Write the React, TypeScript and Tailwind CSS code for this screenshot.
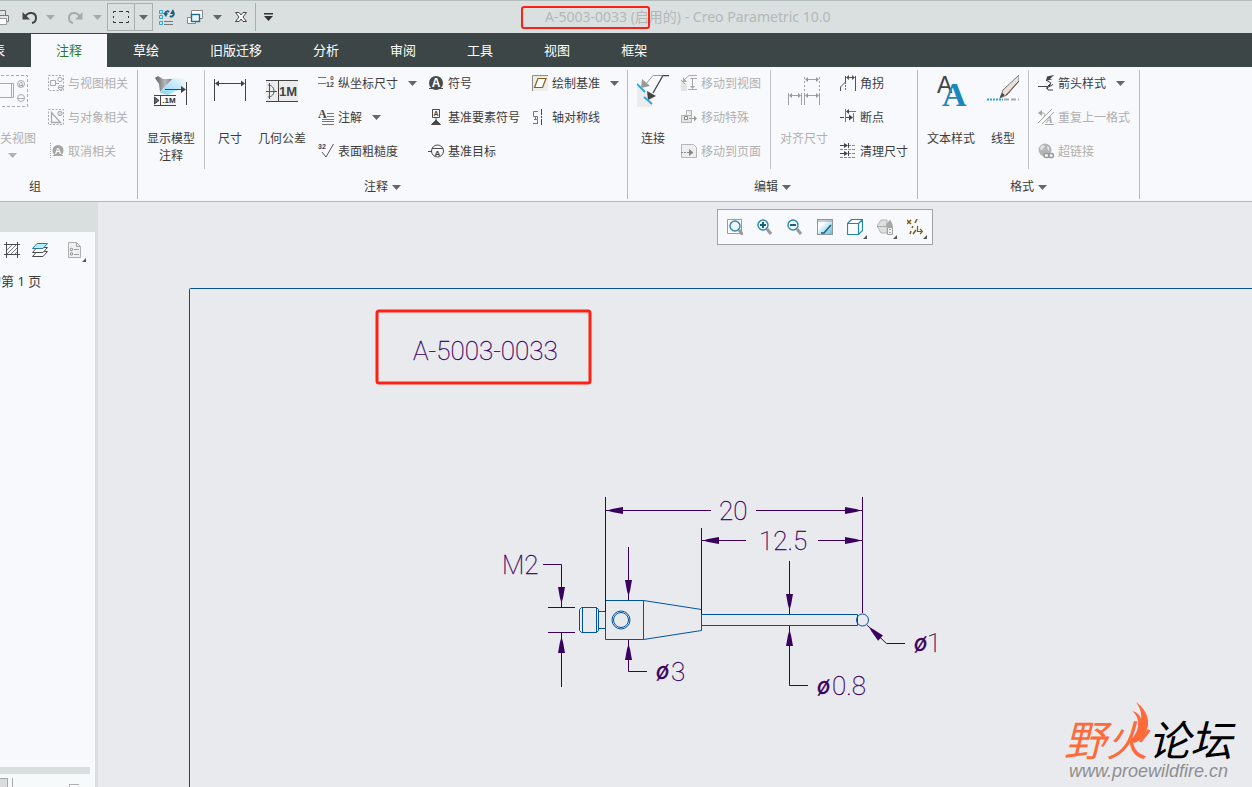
import React from "react";

type IconProps = { w?: number; h?: number; className?: string; children?: React.ReactNode };

const Icon = ({ w = 16, h = 16, className = "", children }: IconProps) => (
  <svg
    width={w}
    height={h}
    viewBox={`0 0 ${w} ${h}`}
    fill="none"
    stroke="#4a4a4a"
    className={`shrink-0 ${className}`}
    aria-hidden="true"
  >
    {children}
  </svg>
);

const Caret = ({ className = "text-[#666]" }: { className?: string }) => (
  <svg width="9" height="5" viewBox="0 0 9 5" className={`shrink-0 ${className}`} aria-hidden="true">
    <path d="M0 0H9L4.500 5Z" fill="currentColor" />
  </svg>
);

// letter that sits inside an icon
const Letter = ({ x, y, size, fill, children }: { x: number; y: number; size: number; fill: string; children: string }) => (
  <text x={x} y={y} fontSize={size} fontWeight="700" fill={fill} stroke="none" textAnchor="middle" fontFamily="Liberation Sans">
    {children}
  </text>
);

/* ---------- ribbon icons ---------- */

const ViewRelatedBig = () => (
  <Icon w={32} h={32}>
    <g stroke="#a9a9a9">
      <path d="M0 .5H31.500V31.500H0" strokeDasharray="3 2" />
      <path d="M1 8.500H17.500V22.500H1M15.500 9V22" />
      <circle cx="25" cy="9" r="3.500" />
      <path d="M23.500 12V9L25 7L26.500 9V12M24 10.500H26" />
      <circle cx="25" cy="23" r="3.500" />
      <path d="M22 23.500H28" />
    </g>
  </Icon>
);

const ViewRelated = () => (
  <Icon>
    <g stroke="#a9a9a9">
      <path d="M.5 .5H15.500V15.500H.5Z" strokeDasharray="2 1.500" />
      <path d="M2.500 5.500H7.500V10.500H2.500Z" />
      <circle cx="12" cy="4.500" r="2.200" />
      <circle cx="12.500" cy="12.500" r="2.200" fill="#f8f9fc" />
      <path d="M8 8.500H11M10.500 12.500H14.500" />
    </g>
  </Icon>
);

const ObjectRelated = () => (
  <Icon>
    <g stroke="#a9a9a9">
      <path d="M.5 .5H15.500V15.500H.5Z" strokeDasharray="2 1.500" />
      <path d="M3.500 3.500V13.500H12.500Z" strokeWidth="1.300" />
      <circle cx="12" cy="4.500" r="2.200" fill="#ddd" />
    </g>
  </Icon>
);

const Unrelate = () => (
  <Icon>
    <path d="M2.500 0V16" stroke="#a9a9a9" strokeDasharray="1 1" />
    <circle cx="10" cy="7.500" r="5.500" fill="#a4a4a4" stroke="none" />
    <Letter x={10} y={11} size={9} fill="#fff">A</Letter>
    <path d="M5 12.500H15" stroke="#a9a9a9" />
  </Icon>
);

const ShowModel = () => (
  <Icon w={34} h={32}>
    <defs>
      <linearGradient id="beam" x1="0" y1="1" x2="1" y2="0">
        <stop offset="0" stopColor="#7fd6f7" />
        <stop offset="1" stopColor="#f8f9fc" />
      </linearGradient>
      <linearGradient id="lamp">
        <stop offset="0" stopColor="#5d5d5d" />
        <stop offset=".6" stopColor="#b9b9b9" />
        <stop offset="1" stopColor="#777" />
      </linearGradient>
    </defs>
    <path d="M6 18L18 3L32 4L30 12L14 20Z" fill="url(#beam)" stroke="none" />
    <path d="M1 3L4 1L9 4L18 4L6 17L5 9Z" fill="url(#lamp)" stroke="none" />
    <path d="M11 14.500H31M32.500 7V30" stroke="#444" />
    <path d="M27 11V18L32 14.500Z" fill="#444" stroke="none" />
    <path d="M0 20.500H22M0 30.500H22M6.500 20V31" stroke="#444" />
    <path d="M.5 22V29L5 25.500Z" fill="#666" stroke="#444" />
    <Letter x={15} y={28} size={8} fill="#333">.1M</Letter>
  </Icon>
);

const Dimension = () => (
  <Icon w={32} h={32}>
    <path d="M.5 4V26M31.500 4V26M2 8.500H30" stroke="#444" />
    <path d="M1 8.500L5 5.500V11.500ZM31 8.500L27 5.500V11.500Z" fill="#444" stroke="none" />
  </Icon>
);

const GeoTolerance = () => (
  <Icon w={32} h={32}>
    <path d="M0 5H32V27H0Z" fill="#ececec" stroke="none" />
    <path d="M0 5.500H32M0 26.500H32M12.500 5V27" stroke="#444" />
    <path d="M2 10C6 10 8 13 8 16S6 22 2 22M3.500 8V24M0 16.500H11" stroke="#555" />
    <Letter x={22} y={21} size={13} fill="#444">1M</Letter>
  </Icon>
);

const Ordinate = () => (
  <Icon>
    <path d="M0 2.500H8M0 8.500H8" stroke="#777" />
    <Letter x={14} y={5} size={6} fill="#444">0</Letter>
    <Letter x={12} y={12} size={7} fill="#444">12</Letter>
  </Icon>
);

const Note = () => (
  <Icon>
    <text x="0" y="9" fontSize="12" fontWeight="700" fill="#444" stroke="none" fontFamily="Liberation Serif">A</text>
    <path d="M9 4.500H16M9 7.500H16M4 10.500H16M4 12.500H16M4 15.500H16" stroke="#777" />
  </Icon>
);

const Roughness = () => (
  <Icon>
    <Letter x={4} y={6} size={7} fill="#444">32</Letter>
    <path d="M4 9L8 14L15.500 1" stroke="#555" />
  </Icon>
);

const SymbolIcon = () => (
  <Icon>
    <circle cx="8" cy="8" r="7" fill="#4a4a4a" stroke="none" />
    <Letter x={8} y={12} size={12} fill="#fff">A</Letter>
    <path d="M1 13.500H15" stroke="#4a4a4a" />
  </Icon>
);

const DatumFeature = () => (
  <Icon>
    <path d="M4.500 .5H11.500V8.500H4.500ZM8 9V13" />
    <Letter x={8} y={7} size={7} fill="#444">A</Letter>
    <path d="M8 11L12.500 15.500H3.500Z" fill="#4a4a4a" />
  </Icon>
);

const DatumTarget = () => (
  <Icon>
    <circle cx="9.500" cy="8" r="6" />
    <path d="M0 8.500H4M4 5.500H15" />
    <Letter x={9.5} y={13} size={8} fill="#444">A</Letter>
  </Icon>
);

const DraftDatum = () => (
  <Icon>
    <path d="M0 0H16V16H0Z" fill="#ececec" stroke="none" />
    <path d="M.5 16V.5H16" stroke="#8c8c8c" />
    <path d="M6 3.500H14L10.500 12.500H2.500Z" fill="#fff" stroke="#8a6116" strokeWidth="1.200" />
  </Icon>
);

const AxisSymmetry = () => (
  <Icon>
    <path d="M6 2.500H1.500V7.500H5.500V10M2 10.500H5.500V14.500M1 14.500H6M3.500 7V11" stroke="#777" />
    <path d="M9.500 0V16" stroke="#444" strokeDasharray="6 1 2 1" />
  </Icon>
);

const Connect = () => (
  <Icon w={32} h={32}>
    <path d="M0 9L15 22V32H0Z" fill="#ececec" stroke="none" />
    <path d="M25 .5H16L9 9" stroke="#999" />
    <path d="M5 4L13 11L4 13Z" fill="#999" stroke="none" />
    <path d="M32 .5H26L16 18" stroke="#444" strokeWidth="1.300" />
    <path d="M10 16L19 21L11 25Z" fill="#444" stroke="none" />
    <path d="M0 9L8 17M7 22L15 29" stroke="#2ba6dc" strokeWidth="1.800" />
  </Icon>
);

const MoveToView = () => (
  <Icon>
    <path d="M0 4L6 9V16H0Z" fill="#e4e4e4" stroke="none" />
    <path d="M16 .5H8L3 5M0 5L4 9M9.500 3.500H16M11.500 4V12" stroke="#a9a9a9" />
    <path d="M2 2V7H6ZM9 11H14L11.500 14Z" fill="#a9a9a9" stroke="none" />
    <path d="M7 14.500H16" stroke="#a9a9a9" />
  </Icon>
);

const MoveSpecial = () => (
  <Icon>
    <path d="M5.500 1.500H10.500V6.500M.5 6.500H10.500V13.500H.5ZM5.500 1.500V6.500" fill="#e4e4e4" stroke="#b5b5b5" />
    <path d="M3.500 7.500H6.500V10.500H3.500Z" fill="#fff" stroke="#888" />
    <path d="M8 9.500H14" stroke="#999" strokeDasharray="2 1" />
    <path d="M13 6.500V12.500L16 9.500Z" fill="#999" stroke="none" />
  </Icon>
);

const MoveToPage = () => (
  <Icon>
    <path d="M.5 1.500H12.500L15.500 4.500V14.500H.5Z" fill="#eee" stroke="#b5b5b5" />
    <path d="M0 9.500H8" stroke="#888" strokeDasharray="2 1" />
    <path d="M8 6V13L12.500 9.500Z" fill="#888" stroke="none" />
  </Icon>
);

const AlignDims = () => (
  <Icon w={32} h={32}>
    <g stroke="#a0a0a0">
      <path d="M16.500 2V18M31.500 2V18" strokeDasharray="2 2" />
      <path d="M18 4.500H30M.5 18V30M13.500 18V30M16.500 18V30M31.500 18V30M2 20.500H12M18 20.500H30" />
    </g>
    <path
      d="M17 4.500L20 2V7ZM31 4.500L28 2V7ZM1 20.500L4 18V23ZM13 20.500L10 18V23ZM17 20.500L20 18V23ZM31 20.500L28 18V23Z"
      fill="#999"
      stroke="none"
    />
  </Icon>
);

const Jog = () => (
  <Icon>
    <path d="M5.500 1V7L.5 12V16M15.500 1V16M7 2.500H14" stroke="#555" />
    <path d="M5.500 7V16" stroke="#777" strokeDasharray="2 1" />
    <path d="M6 2.500L9 0V5ZM15 2.500L12 0V5Z" fill="#555" stroke="none" />
  </Icon>
);

const BreakIcon = () => (
  <Icon>
    <path d="M5.500 0V13M13.500 4V13M8 2.500H16" stroke="#777" />
    <path d="M0 8.500H4M6 8.500H12" stroke="#444" />
    <path d="M9 5.500V11.500L13 8.500ZM6 2.500L9 0V5Z" fill="#444" stroke="none" />
  </Icon>
);

const CleanDims = () => (
  <Icon>
    <path d="M0 2.500H16M0 6.500H16M0 10.500H16M0 14.500H16" stroke="#888" strokeDasharray="3 1" />
    <path d="M0 2.500H5M0 10.500H5M8.500 0V5M8.500 8V13" stroke="#444" />
    <path d="M4 0V5L8 2.500ZM4 8V13L8 10.500Z" fill="#444" stroke="none" />
  </Icon>
);

const TextStyle = () => (
  <Icon w={32} h={32}>
    <text x="2" y="18" fontSize="23" fill="#444" stroke="none" fontFamily="Liberation Sans">A</text>
    <text x="7" y="31" fontSize="34" fontWeight="700" fill="#1c87b8" stroke="none" fontFamily="Liberation Serif">A</text>
  </Icon>
);

const LineStyle = () => (
  <Icon w={32} h={32}>
    <path d="M0 24.500H16" stroke="#2ba6dc" strokeWidth="2" strokeDasharray="2 1" />
    <path d="M17 24.500H32" stroke="#a9a9a9" strokeWidth="2" strokeDasharray="5 2" />
    <path d="M13 23L16 15L32 0V6L20 20Z" fill="#e6e2de" stroke="#777" />
    <path d="M19 20L32 6" stroke="#6b4a35" />
    <path d="M13 23L15 18L18 20Z" fill="#444" stroke="none" />
  </Icon>
);

const ArrowStyle = () => (
  <Icon>
    <path d="M0 11.500H10L13 9.500M8 13.500L15 9.500M8 5L13 8L9 12L10 15H15" stroke="#444" />
    <path d="M9 1.500L16 0L12 4H15L8 6Z" fill="#444" stroke="none" />
  </Icon>
);

const RepeatFormat = () => (
  <Icon>
    <path d="M1 4H5C7 4 7 6 6 8M14 0L0 14M16 3L4 15" stroke="#a4a4a4" />
    <path d="M0 4L4 1V7Z" fill="#a4a4a4" stroke="none" />
    <text x="8" y="14" fontSize="10" fontWeight="700" fontStyle="italic" fill="#a4a4a4" stroke="none" fontFamily="Liberation Serif">A</text>
    <path d="M7 15.500H16" stroke="#a4a4a4" />
  </Icon>
);

const Hyperlink = () => (
  <Icon>
    <circle cx="7" cy="7" r="6.500" fill="#b5b5b5" stroke="none" />
    <path d="M3 3C6 1 8 3 6 5S3 8 2 6ZM9 3C12 4 12 7 10 8Z" fill="#e2e2e2" stroke="none" />
    <rect x="6" y="10.500" width="5" height="4" rx="2" stroke="#999" strokeWidth="1.500" fill="#f8f9fc" />
    <rect x="10.500" y="10.500" width="5" height="4" rx="2" stroke="#999" strokeWidth="1.500" />
  </Icon>
);

/* ---------- quick access icons ---------- */

const Printer = () => (
  <Icon w={10}>
    <path d="M0 1.500H5.500V7M0 6.500H8.500V12.500H6" fill="#e6e6e6" stroke="#777" />
    <path d="M0 9.500H6.500V15.500H0" fill="#fff" stroke="#999" />
  </Icon>
);

const Undo = ({ color, flip }: { color: string; flip?: boolean }) => (
  <Icon className={flip ? "-scale-x-100" : ""}>
    <path d="M3 8C6 2 14 3 14 9C14 11.500 12.500 13.500 10 14" stroke={color} strokeWidth="2" />
    <path d="M.5 3V10.500H8Z" fill={color} stroke="none" />
  </Icon>
);

const SelectBox = () => (
  <Icon>
    <path d="M.5 4V2.500H3M6 2.500H10M13 2.500H15.500V4M15.500 7V9M15.500 12V13.500H13M10 13.500H6M3 13.500H.5V12M.5 9V7" stroke="#333" />
  </Icon>
);

const Regenerate = () => (
  <Icon>
    <path d="M.5 1.500H3.500V4.500H.5ZM.5 6.500H3.500V9.500H.5ZM.5 12.500H3.500V15.500H.5Z" stroke="#2ba6dc" />
    <path d="M5 12.500H14M5 15.500H14" stroke="#777" />
    <path d="M6 4C7 2 9 2 10 3M15 5C14 8 12 8 11 7" stroke="#1d5f7e" strokeWidth="2" />
    <path d="M4 4H9L7 8ZM11 5L14 0L16 5Z" fill="#1d5f7e" stroke="none" />
  </Icon>
);

const Windows = () => (
  <Icon>
    <path d="M4.500 1.500H15.500V9.500H4.500Z" fill="#fff" stroke="#888" />
    <path d="M.5 8.500H8.500V14.500H.5Z" fill="#fff" stroke="#888" />
    <rect x="4.500" y="5.500" width="8" height="7" fill="#e9f6fb" stroke="#1d6f8e" strokeWidth="1.400" />
  </Icon>
);

const CloseWindow = () => (
  <Icon w={14} h={14}>
    <path d="M1.500 2.500H5L7 5L9 2.500H12.500L9 7L12.500 11.500H9L7 9L5 11.500H1.500L5 7Z" fill="#fff" stroke="#444" />
  </Icon>
);

/* ---------- graphics toolbar icons ---------- */

const Lens = ({ x = 7, y = 6, sign }: { x?: number; y?: number; sign?: "plus" | "minus" }) => (
  <>
    <path d={`M${x + 4} ${y + 4}L${x + 8} ${y + 9}`} stroke="#999" strokeWidth="3" />
    <circle cx={x} cy={y} r="5" fill="#eef9fd" stroke="#2b86ac" strokeWidth="1.400" />
    {sign && <path d={`M${x - 3} ${y}H${x + 3}`} stroke="#1d5f7e" strokeWidth="2" />}
    {sign === "plus" && <path d={`M${x} ${y - 3}V${y + 3}`} stroke="#1d5f7e" strokeWidth="2" />}
  </>
);

const Refit = () => (
  <Icon>
    <path d="M.5 .5H14.500V14.500H.5Z" fill="#fff" stroke="#999" />
    <Lens x={8} y={7} />
  </Icon>
);

const ZoomIn = () => (
  <Icon>
    <Lens x={6} sign="plus" />
  </Icon>
);

const ZoomOut = () => (
  <Icon>
    <Lens x={6} sign="minus" />
  </Icon>
);

const Repaint = () => (
  <Icon>
    <defs>
      <linearGradient id="paint" x1="0" y1="0" x2="1" y2="1">
        <stop offset=".3" stopColor="#fff" />
        <stop offset="1" stopColor="#5db9da" />
      </linearGradient>
    </defs>
    <rect x=".5" y=".5" width="15" height="15" fill="url(#paint)" stroke="#8b9a9f" />
    <path d="M0 2H16" stroke="#8b9a9f" />
    <path d="M4 14H7L14 6" stroke="#1d5f7e" strokeWidth="1.500" />
  </Icon>
);

const Cube = () => (
  <Icon>
    <path d="M.5 4.500L4.500 .5H15.500V11.500L11.500 15.500H.5ZM.5 4.500H11.500V15.500M11.500 4.500L15.500 .5" fill="#fff" stroke="#2187b3" strokeWidth="1.200" />
  </Icon>
);

const Saved = () => (
  <Icon>
    <path d="M0 7L4 1H10V14H4Z" fill="#dedede" stroke="#b5b5b5" />
    <path d="M9 7C9 4 12 3 13 .5C14 3 16 5 16 8H9Z" fill="#a6a6a6" stroke="none" />
    <path d="M10.500 8.500H15.500V15.500H10.500Z" fill="#eee" stroke="#a0a0a0" />
    <path d="M12 10.500H14M12 13.500H14M0 7.500H9" stroke="#a9a9a9" />
  </Icon>
);

const DatumDisplay = () => (
  <Icon>
    <g stroke="#7d5a18" strokeWidth="1.500">
      <path d="M0 1L4 5M4 1L0 5M10 0L8 4M6 7L5 9M4 12L3 15M9 11L6 15" />
      <path d="M10.500 7V12.500H15M13 10L15.500 12.500L13 15" strokeWidth="1.200" />
    </g>
  </Icon>
);

/* ---------- tree panel icons ---------- */

const Hatch = () => (
  <Icon>
    <path d="M2.500 0V16M13.500 0V16M0 2.500H16M0 12.500H16" />
    <path d="M3 8L8 3M3 12L12 3M7 12L13 6M11 12L13 10" stroke="#777" />
  </Icon>
);

const Layers = () => (
  <Icon>
    <path d="M5 9.500H15.500L11 14.500H.5Z" fill="#fff" />
    <path d="M5 5.500H15.500L11 10.500H.5Z" fill="#fff" />
    <path d="M5 1.500H15.500L11 6.500H.5Z" fill="#b9ecf8" stroke="#2a7c99" />
  </Icon>
);

const ListDoc = () => (
  <Icon w={14}>
    <path d="M.5 .5H8.500L12.500 4.500V15.500H.5Z" fill="#eef1f2" stroke="#b0b0b0" />
    <path d="M8.500 .5V4.500H12.500M6 7.500H11M6 12.500H11" stroke="#a0a0a0" />
    <circle cx="3.500" cy="7.500" r="1.200" stroke="#888" />
    <circle cx="3.500" cy="12" r="1.200" stroke="#888" />
  </Icon>
);

/* ---------- ribbon pieces ---------- */

type CommandProps = { icon: React.ReactNode; label: string; disabled?: boolean; menu?: boolean };

const Command = ({ icon, label, disabled, menu }: CommandProps) => (
  <button
    type="button"
    disabled={disabled}
    className="flex h-[34px] items-center gap-1 pb-0.5 whitespace-nowrap text-[#3c3c3c] disabled:text-[#b0b0b0]"
  >
    {icon}
    <span className="pt-0.5">{label}</span>
    {menu && <Caret className="ml-1.5 text-[#666]" />}
  </button>
);

type BigCommandProps = CommandProps & { className: string; second?: string };

const BigCommand = ({ icon, label, second, disabled, menu, className }: BigCommandProps) => (
  <button
    type="button"
    disabled={disabled}
    className={`flex shrink-0 flex-col items-center pt-2 leading-[17px] whitespace-nowrap text-[#3c3c3c] disabled:text-[#b0b0b0] ${className}`}
  >
    {icon}
    <span className="mt-[23px]">{label}</span>
    {second && <span>{second}</span>}
    {menu && <Caret className="mt-1.5 text-[#b0b0b0]" />}
  </button>
);

const Column = ({ className = "", children }: { className?: string; children: React.ReactNode }) => (
  <div className={`flex shrink-0 flex-col items-start ${className}`}>{children}</div>
);

const Divider = () => <div className="mt-[3px] w-px shrink-0 bg-[#bfc4c6]" />;

const Group = ({
  title,
  menu,
  className = "",
  children,
}: {
  title: string;
  menu?: boolean;
  className?: string;
  children: React.ReactNode;
}) => (
  <section className={`flex shrink-0 flex-col ${className}`}>
    <div className="flex h-[102px]">{children}</div>
    <button type="button" className="flex h-8 items-center justify-center gap-1 pt-1 text-[#3c3c3c]">
      {title}
      {menu && <Caret />}
    </button>
  </section>
);

const GroupDivider = () => <div className="mt-[3px] mb-0.5 w-px shrink-0 bg-[#b4babc]" />;

const tabs = ["表", "注释", "草绘", "旧版迁移", "分析", "审阅", "工具", "视图", "框架"];

const TitleBar = () => (
  <header className="flex h-[33px] shrink-0 items-center border-t border-[#b4bcbc] bg-[#dae0df]">
    <button type="button" aria-label="打印"><Printer /></button>
    <button type="button" aria-label="撤消" className="ml-3"><Undo color="#444" /></button>
    <button type="button" aria-label="撤消列表" className="ml-2"><Caret className="text-[#a5abab]" /></button>
    <button type="button" aria-label="重做" className="ml-3"><Undo color="#a5abab" flip /></button>
    <button type="button" aria-label="重做列表" className="ml-2.5"><Caret className="text-[#a5abab]" /></button>
    <div className="ml-[5px] flex h-7 items-stretch border border-[#a9afaf]">
      <button type="button" aria-label="选择" className="px-[5px]"><SelectBox /></button>
      <button type="button" aria-label="选择方式" className="border-l border-[#a9afaf] px-1"><Caret /></button>
    </div>
    <button type="button" aria-label="重新生成" className="ml-1.5"><Regenerate /></button>
    <button type="button" aria-label="窗口" className="ml-3"><Windows /></button>
    <button type="button" aria-label="窗口列表" className="ml-2.5"><Caret /></button>
    <button type="button" aria-label="关闭" className="ml-3"><CloseWindow /></button>
    <div className="ml-[7px] h-7 w-px bg-[#a9afaf]" />
    <button type="button" aria-label="自定义快速访问工具栏" className="ml-2">
      <svg width="9" height="8" viewBox="0 0 9 8" aria-hidden="true">
        <path d="M0 0H9V1.500H0ZM0 3H9L4.500 8Z" fill="#333" />
      </svg>
    </button>
    <h1 className="relative ml-[272px] text-[14px] whitespace-nowrap text-[#b3b8b8]">
      A-5003-0033 (启用的) - Creo Parametric 10.0
      <span className="absolute -top-0.5 -left-6 h-[23px] w-[129px] rounded-[3px] border-2 border-[#ff2015]" />
    </h1>
  </header>
);

const TabBar = () => (
  <nav className="flex h-[34px] shrink-0 gap-px overflow-hidden bg-[#3c4646] pt-px">
    {tabs.map((tab) => (
      <button
        key={tab}
        type="button"
        className={`shrink-0 px-[25px] text-[13px] first:-ml-[33px] ${
          tab === "注释" ? "bg-[#f8f9fc] text-[#2f7d1c]" : "text-white"
        }`}
      >
        {tab}
      </button>
    ))}
  </nav>
);

const Ribbon = () => (
  <div className="flex shrink-0 overflow-hidden border-b border-[#b0b8b8] bg-[#f8f9fc]">
    <Group title="组" className="-ml-[67px] w-[204px]">
      <BigCommand icon={<ViewRelatedBig />} label="相关视图" disabled menu className="ml-[55px] w-12" />
      <Column className="ml-3">
        <Command icon={<ViewRelated />} label="与视图相关" disabled />
        <Command icon={<ObjectRelated />} label="与对象相关" disabled />
        <Command icon={<Unrelate />} label="取消相关" disabled />
      </Column>
    </Group>
    <GroupDivider />
    <Group title="注释" menu className="w-[489px]">
      <BigCommand icon={<ShowModel />} label="显示模型" second="注释" className="w-[66px]" />
      <Divider />
      <BigCommand icon={<Dimension />} label="尺寸" className="w-[50px]" />
      <BigCommand icon={<GeoTolerance />} label="几何公差" className="w-[54px]" />
      <Column className="ml-[9px] w-[110px]">
        <Command icon={<Ordinate />} label="纵坐标尺寸" menu />
        <Command icon={<Note />} label="注解" menu />
        <Command icon={<Roughness />} label="表面粗糙度" />
      </Column>
      <Column className="w-[104px]">
        <Command icon={<SymbolIcon />} label="符号" />
        <Command icon={<DatumFeature />} label="基准要素符号" />
        <Command icon={<DatumTarget />} label="基准目标" />
      </Column>
      <Column>
        <Command icon={<DraftDatum />} label="绘制基准" menu />
        <Command icon={<AxisSymmetry />} label="轴对称线" />
      </Column>
    </Group>
    <GroupDivider />
    <Group title="编辑" menu className="w-[289px]">
      <BigCommand icon={<Connect />} label="连接" className="w-[50px]" />
      <Column className="ml-[3px] w-[89px]">
        <Command icon={<MoveToView />} label="移动到视图" disabled />
        <Command icon={<MoveSpecial />} label="移动特殊" disabled />
        <Command icon={<MoveToPage />} label="移动到页面" disabled />
      </Column>
      <Divider />
      <BigCommand icon={<AlignDims />} label="对齐尺寸" disabled className="w-[66px]" />
      <Column className="ml-[3px]">
        <Command icon={<Jog />} label="角拐" />
        <Command icon={<BreakIcon />} label="断点" />
        <Command icon={<CleanDims />} label="清理尺寸" />
      </Column>
    </Group>
    <GroupDivider />
    <Group title="格式" menu className="w-[221px]">
      <BigCommand icon={<TextStyle />} label="文本样式" className="w-[66px]" />
      <BigCommand icon={<LineStyle />} label="线型" className="mr-1.5 w-[38px]" />
      <Divider />
      <Column className="ml-[9px]">
        <Command icon={<ArrowStyle />} label="箭头样式" menu />
        <Command icon={<RepeatFormat />} label="重复上一格式" disabled />
        <Command icon={<Hyperlink />} label="超链接" disabled />
      </Column>
    </Group>
    <GroupDivider />
  </div>
);

const Flyout = () => (
  <svg width="4" height="4" viewBox="0 0 4 4" className="absolute -right-1 -bottom-1" aria-hidden="true">
    <path d="M4 0V4H0Z" fill="#555" />
  </svg>
);

const TreePanel = () => (
  <aside className="flex w-[98px] shrink-0 flex-col border-t-[30px] border-r-[3px] border-[#d9dfde] bg-[#f7f9fc]">
    <div className="flex h-9 items-center pl-1">
      <button type="button" aria-label="图纸"><Hatch /></button>
      <button type="button" aria-label="层" className="ml-3"><Layers /></button>
      <button type="button" aria-label="设置" className="relative ml-5">
        <ListDoc />
        <Flyout />
      </button>
    </div>
    <p className="-ml-3 pt-[5px] text-[13px] whitespace-nowrap text-[#3c3c3c]">的第 1 页</p>
    <div className="mt-auto mr-[5px] h-[7px] bg-[#d9dfde]" />
    <div className="flex h-[13px] items-end bg-[#f6fafb]">
      <div className="h-[9px] w-2 border-t border-r border-[#a9a9a9] bg-[#dcdcdc]" />
      <div className="ml-1 h-[9px] w-px bg-[#a9a9a9]" />
      <div className="ml-14 h-[3px] w-2.5 border-t border-l border-[#b0b0b0]" />
    </div>
  </aside>
);

const tools = [
  { name: "重新调整", icon: <Refit /> },
  { name: "放大", icon: <ZoomIn /> },
  { name: "缩小", icon: <ZoomOut /> },
  { name: "重画", icon: <Repaint /> },
  { name: "显示样式", icon: <Cube />, flyout: true },
  { name: "已保存方向", icon: <Saved />, flyout: true },
  { name: "基准显示过滤器", icon: <DatumDisplay />, flyout: true },
];

const ViewToolbar = () => (
  <div className="absolute top-[7px] left-[619px] flex h-9 items-center gap-3.5 border border-[#a0a4a6] bg-[#f8f9fc] px-[9px]">
    {tools.map((tool) => (
      <button key={tool.name} type="button" aria-label={tool.name} className="relative">
        {tool.icon}
        {tool.flyout && <Flyout />}
      </button>
    ))}
  </div>
);

// filled arrow head with its tip at x,y; angle 0 points right
const Head = ({ x, y, angle }: { x: number; y: number; angle: number }) => (
  <path d="M0 0L-5 -1.500L-16 -3.500V3.500L-5 1.500Z" transform={`translate(${x} ${y}) rotate(${angle})`} fill="#3a005f" stroke="none" />
);

const Phi = ({ x, y }: { x: number; y: number }) => (
  <text x={x} y={y} fontSize="24" fontWeight="400" fontStyle="italic">
    ø
  </text>
);

const Sheet = () => (
  <svg className="absolute inset-0 h-full w-full" role="img" aria-label="A-5003-0033">
    <g transform="translate(-98 -202)" fill="none">
      <rect x="189.500" y="288.500" width="4000" height="4000" rx="1" stroke="#004f98" />

      {/* part */}
      <g stroke="#0053a0">
        <path d="M581.500 607.500H596.500L598.500 609.500V630.500L596.500 632.500H581.500L579.500 630.500V609.500ZM582.500 607.500V632.500M596.500 607.500V632.500" />
        <path d="M598.500 611.500H605.500M598.500 628.500H605.500" />
        <path d="M605.500 600.500H643.500V639.500H605.500Z" />
        <circle cx="621" cy="620" r="9" />
        <circle cx="621" cy="620" r="7.500" />
        <path d="M643.500 600.500L701.500 609.500V630.500L643.500 639.500" />
        <path d="M701.500 614.500H857.500V625.500H701.500" />
        <circle cx="862.500" cy="620" r="6" />
      </g>

      {/* dimensions */}
      <g stroke="#3a005f">
        <path d="M605.500 497V612M862.500 497V613M701.500 528V614" />
        <path d="M606 510.500H711M756 510.500H862M702 540.500H746M818 540.500H862" />
        <path d="M543 564.500H561.500V607M548 607.500H575M548 632.500H575M561.500 633V687" />
        <path d="M628.500 547V600M628.500 640V671.500H647" />
        <path d="M789.500 561V614M789.500 626V685.500H808" />
        <path d="M867 625L886.500 643.500H905" />
      </g>
      <Head x={607} y={510.5} angle={180} />
      <Head x={861} y={510.5} angle={0} />
      <Head x={703} y={540.5} angle={180} />
      <Head x={861} y={540.5} angle={0} />
      <Head x={561.5} y={603} angle={90} />
      <Head x={561.5} y={637} angle={270} />
      <Head x={628.5} y={596} angle={90} />
      <Head x={628.5} y={644} angle={270} />
      <Head x={789.5} y={610} angle={90} />
      <Head x={789.5} y={630} angle={270} />
      <Head x={869} y={627} angle={224} />

      <g fill="#3a005f" stroke="#3a005f" strokeWidth=".3" fontFamily="Roboto, sans-serif" fontSize="26" fontWeight="100">
        <text x="413" y="360">A-5003-0033</text>
        <text x="719" y="520">20</text>
        <text x="759" y="550">12.5</text>
        <text x="502" y="574">M2</text>
        <Phi x={656} y={679} />
        <text x="671" y="681">3</text>
        <Phi x={914} y={651} />
        <text x="927" y="652">1</text>
        <Phi x={817} y={694} />
        <text x="832" y="695">0.8</text>
      </g>
      <rect x="377" y="311" width="213" height="72" rx="2" stroke="#ff2015" strokeWidth="3" />
    </g>
  </svg>
);

const Watermark = () => (
  <div className="absolute right-5 bottom-2 flex flex-col items-end italic">
    <svg width="18" height="42" viewBox="0 0 18 42" className="absolute -top-4 right-[84px]" aria-hidden="true">
      <path d="M6 1C13 6 19 14 18 24C17 32 11 40 4 42L1 38C6 34 9 27 8 20C7 15 5 12 2 10C7 11 10 14 11 18C12 12 10 7 6 1Z" fill="#ff6a39" />
    </svg>
    <p className="text-[42px] leading-[46px] text-black">
      <span className="text-[#ff6a39]">野火</span>论坛
    </p>
    <a href="#" className="mr-1 font-['Liberation_Sans',sans-serif] text-[18px] leading-4 text-[#8f8f8f]">
      www.proewildfire.cn
    </a>
  </div>
);

const App = () => {
  return (
    <div className="flex h-screen flex-col overflow-hidden bg-[#e8eaee] font-['Noto_Sans','Noto_Sans_CJK_SC',sans-serif] text-xs">
      <TitleBar />
      <TabBar />
      <Ribbon />
      <div className="flex min-h-0 flex-1">
        <TreePanel />
        <main className="relative min-w-0 flex-1 overflow-hidden">
          <Sheet />
          <ViewToolbar />
          <Watermark />
        </main>
      </div>
    </div>
  );
};

export default App;
